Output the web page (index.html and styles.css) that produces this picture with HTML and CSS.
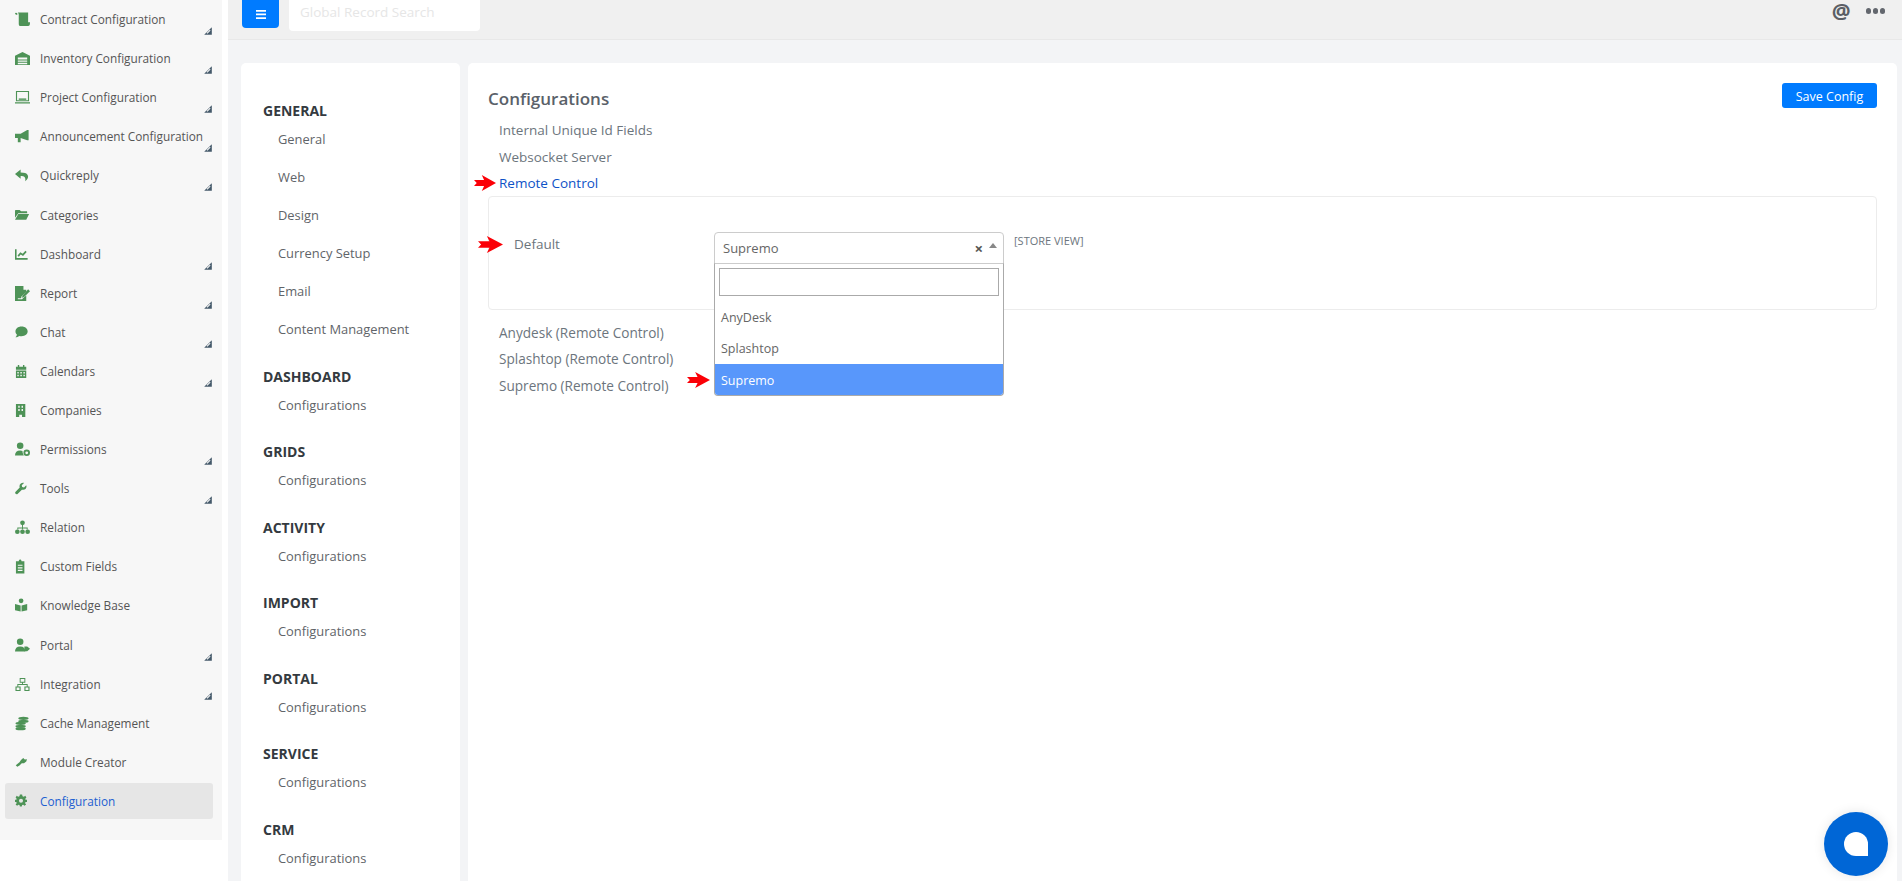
FILE: index.html
```html
<!DOCTYPE html>
<html lang="en">
<head>
<meta charset="utf-8">
<title>Configurations</title>
<link rel="stylesheet" href="styles.css">
</head>
<body>
<svg class="defs" width="0" height="0">
  <defs>
    <symbol id="corner" viewBox="0 0 8 8"><path d="M7.800 0.200V7.800H0.200Z" fill="#44596a"/><path d="M6.200 3.200 3 6.400" stroke="#f7f7f7" stroke-width="1.100"/></symbol>
    <symbol id="arrow" viewBox="0 0 24 16" preserveAspectRatio="none"><path d="M0 5H11L8.500 0 24 8 8.500 16 11 11H0L3 8Z" fill="#fb0007"/></symbol>
  </defs>
</svg>
<aside class="sidebar">
  <a class="nav-item"><svg class="nav-icon" viewBox="0 0 16 16"><path d="M0 1.500C0 .5 2 .5 2.500 1.500V3H1ZM3 .5H14V11H16C16 14 15.500 15 14 15H6C4.500 15 4 14 4 12.500V3C4 2 3.500 1 3 .5Z"/></svg><span>Contract Configuration</span><svg class="corner"><use href="#corner"/></svg></a>
  <a class="nav-item"><svg class="nav-icon" viewBox="0 0 16 16"><path d="M0 5 8 1 16 5V15H0ZM3 7V9H13V7ZM3 10V11.500H13V10ZM3 12.500V14H13V12.500Z" fill-rule="evenodd"/></svg><span>Inventory Configuration</span><svg class="corner"><use href="#corner"/></svg></a>
  <a class="nav-item"><svg class="nav-icon" viewBox="0 0 16 16"><path d="M1 1H15V12H1ZM2.200 2.200V10.800H13.800V2.200ZM0 13H16V14.500H0Z" fill-rule="evenodd"/><path d="M4 9H12V10.500H4Z"/></svg><span>Project Configuration</span><svg class="corner"><use href="#corner"/></svg></a>
  <a class="nav-item"><svg class="nav-icon" viewBox="0 0 16 16"><path d="M0 5H6L13 1H14.500V12H13L6 9.500V14H3V9.500H0Z"/></svg><span>Announcement Configuration</span><svg class="corner"><use href="#corner"/></svg></a>
  <a class="nav-item"><svg class="nav-icon" viewBox="0 0 16 16"><path d="M6 1.500 0 6.500 6 11.500V8.500C10 8.500 11.500 9.500 11 14 14 12 14.500 9.500 13.500 7.500 12.500 5.500 10 4.800 6 4.800Z"/></svg><span>Quickreply</span><svg class="corner"><use href="#corner"/></svg></a>
  <a class="nav-item"><svg class="nav-icon" viewBox="0 0 16 16"><path d="M0 3C0 2.500.5 2 1 2H5L6.500 3.500H12.500C13 3.500 13 4 13 5.500H3.500L0 10.500ZM3.500 6.500H15L12 12.500H0Z"/></svg><span>Categories</span></a>
  <a class="nav-item"><svg class="nav-icon" viewBox="0 -1 19 19"><path d="M0 2H2V13H16V15H0Z"/><path d="M4 10.500 7 7 10 9 14 4.500" fill="none" stroke="#4e9357" stroke-width="2.200"/></svg><span>Dashboard</span><svg class="corner"><use href="#corner"/></svg></a>
  <a class="nav-item"><svg class="nav-icon" viewBox="0 0 16 16"><path d="M0 0H9V4H12V6L7 11 6.500 13H3V14H7.500L9 12.500 12 10V16H0Z"/><path d="M8 10 14 3.500 16 5.500 10 11.500 7.500 12.500Z"/></svg><span>Report</span><svg class="corner"><use href="#corner"/></svg></a>
  <a class="nav-item"><svg class="nav-icon" viewBox="0 0 16 16"><path d="M7 1.500C11 1.500 13.500 3.800 13.500 6.700S11 12 7 12C6 12 5 11.800 4.500 11.600 3.500 12.500 2 13 .5 13 1.500 12 2 11 2 10 .8 9.200.5 8 .5 6.700.5 3.800 3 1.500 7 1.500Z"/></svg><span>Chat</span><svg class="corner"><use href="#corner"/></svg></a>
  <a class="nav-item"><svg class="nav-icon" viewBox="0 0 16 16"><path d="M1 3H3V1H4.500V3H8.500V1H10V3H12V6H1ZM1 7H12V15H1ZM2.500 8.500V10H4V8.500ZM5.700 8.500V10H7.300V8.500ZM9 8.500V10H10.500V8.500ZM2.500 11.500V13H4V11.500ZM5.700 11.500V13H7.300V11.500ZM9 11.500V13H10.500V11.500Z" fill-rule="evenodd"/></svg><span>Calendars</span><svg class="corner"><use href="#corner"/></svg></a>
  <a class="nav-item"><svg class="nav-icon" viewBox="0 0 16 16"><path d="M1 1H11V15H7.500V12.500H4.500V15H1ZM3.500 3V5H5V3ZM7 3V5H8.500V3ZM3.500 6.500V8.500H5V6.500ZM7 6.500V8.500H8.500V6.500Z" fill-rule="evenodd"/></svg><span>Companies</span></a>
  <a class="nav-item"><svg class="nav-icon" viewBox="0 0 16 16"><circle cx="5.500" cy="4" r="3.500"/><path d="M0 14.500C0 11 2 9 5.500 9 6.500 9 7.500 9.300 8 9.500 8 11 8.500 13 9.500 14.500Z"/><circle cx="12.500" cy="11.500" r="2.500" fill="none" stroke="#4e9357" stroke-width="2"/></svg><span>Permissions</span><svg class="corner"><use href="#corner"/></svg></a>
  <a class="nav-item"><svg class="nav-icon" viewBox="0 0 20 20"><path d="M15 3.500 12 6.500 9.500 6 9 3.500 12 .5C9 -.2 6 2 6 5 6 5.700 6.100 6.300 6.300 6.800L.8 12.300C-.2 13.300 .2 14.500 .8 15.100 1.500 15.800 2.700 16 3.700 15L9.200 9.500C9.700 9.700 10.300 9.800 11 9.800 14 9.800 16.200 6.800 15 3.500Z" transform="translate(0 2)"/></svg><span>Tools</span><svg class="corner"><use href="#corner"/></svg></a>
  <a class="nav-item"><svg class="nav-icon" viewBox="0 0 16 16"><circle cx="8" cy="3" r="2.500"/><path d="M7.500 5H8.500V8H13.500V10H12.500V9H8.500V10H7.500V9H3.500V10H2.500V8H7.500Z"/><circle cx="2.500" cy="12.500" r="2.500"/><circle cx="8" cy="12.500" r="2.500"/><circle cx="13.500" cy="12.500" r="2.500"/></svg><span>Relation</span></a>
  <a class="nav-item"><svg class="nav-icon" viewBox="0 0 16 16"><path d="M1 2.500H4C4 1 5 .5 5.500 .5S7 1 7 2.500H10V15.500H1ZM3 6V7.200H8V6ZM3 8.800V10H8V8.800ZM3 11.500V12.700H8V11.500Z" fill-rule="evenodd"/></svg><span>Custom Fields</span></a>
  <a class="nav-item"><svg class="nav-icon" viewBox="0 0 16 16"><circle cx="6.500" cy="3" r="2.500"/><path d="M0 6.500 6 8V14.500L0 13ZM7 8 13 6.500V13L7 14.500Z"/></svg><span>Knowledge Base</span></a>
  <a class="nav-item"><svg class="nav-icon" viewBox="0 0 16 16"><circle cx="5.500" cy="4" r="3.500"/><path d="M0 14.500C0 11 2 9 5.500 9S11 11 11 14.500Z"/><path d="M10 9H13L16 11.500 13 14H10Z"/></svg><span>Portal</span><svg class="corner"><use href="#corner"/></svg></a>
  <a class="nav-item"><svg class="nav-icon" viewBox="0 0 16 16"><path d="M5 1H11V6H8.500V7.500H13.500V10H15.500V15H10V10H12.500V8.500H3.500V10H6V15H.5V10H2.500V7.500H7.500V6H5ZM6 2V5H10V2ZM1.700 11.200V13.800H4.800V11.200ZM11.200 11.200V13.800H14.300V11.200Z" fill-rule="evenodd"/></svg><span>Integration</span><svg class="corner"><use href="#corner"/></svg></a>
  <a class="nav-item"><svg class="nav-icon" viewBox="0 0 16 16"><ellipse cx="9" cy="2.500" rx="5.500" ry="1.800"/><ellipse cx="9" cy="5.500" rx="5.500" ry="1.600"/><ellipse cx="6" cy="7.800" rx="5.500" ry="1.800"/><ellipse cx="6" cy="10.800" rx="5.500" ry="1.600"/><ellipse cx="6" cy="13.500" rx="5.500" ry="1.700"/></svg><span>Cache Management</span></a>
  <a class="nav-item"><svg class="nav-icon" viewBox="0 0 20 20"><path d="M1 13.500 6 9.500 8 6.500 11 4 13 6 16 5.500 15 8.500 12 11 9 11 6 14 3 15.500Z"/></svg><span>Module Creator</span></a>
  <a class="nav-item active"><svg class="nav-icon" viewBox="0 -2 20 20"><path d="M6.500 0H9.500L10 2.200 11.800 3 13.700 1.800 15.200 4 13.700 5.500 14 7H16V10H14L13.500 11.500 14.800 13.300 12.700 15 11 13.500 9.500 14 9 16H6.500L6 14 4.500 13.500 2.800 15 .8 13.300 2.200 11.500 1.800 10H0V7H1.800L2.200 5.500 .8 4 2.300 1.800 4.200 3 6 2.200ZM8 5.500A2.700 2.700 0 1 0 8 10.900 2.700 2.700 0 1 0 8 5.500Z" fill-rule="evenodd"/></svg><span>Configuration</span></a>
</aside>

<div class="main">
  <header class="topbar">
    <button class="menu-btn" type="button" aria-label="Menu"><svg viewBox="0 0 10 9" width="10" height="9"><path d="M0 0H10V1.700H0ZM0 3.600H10V5.300H0ZM0 7.200H10V9H0Z" fill="#fff"/></svg></button>
    <div class="search">Global Record Search</div>
    <div class="top-actions">
      <span class="at">@</span>
      <span class="dots"><i></i><i></i><i></i></span>
    </div>
  </header>

  <div class="content">
    <nav class="card side-card">
      <h4>GENERAL</h4>
      <a>General</a><a>Web</a><a>Design</a><a>Currency Setup</a><a>Email</a><a>Content Management</a>
      <h4>DASHBOARD</h4><a>Configurations</a>
      <h4>GRIDS</h4><a>Configurations</a>
      <h4>ACTIVITY</h4><a>Configurations</a>
      <h4>IMPORT</h4><a>Configurations</a>
      <h4>PORTAL</h4><a>Configurations</a>
      <h4>SERVICE</h4><a>Configurations</a>
      <h4>CRM</h4><a>Configurations</a>
    </nav>

    <section class="card config-card">
      <div class="config-head">
        <h3>Configurations</h3>
        <button class="save-btn" type="button">Save Config</button>
      </div>
      <ul class="config-list">
        <li>Internal Unique Id Fields</li>
        <li>Websocket Server</li>
        <li class="current"><svg class="red-arrow a1"><use href="#arrow"/></svg>Remote Control</li>
      </ul>
      <div class="setting-box">
        <div class="setting-label"><svg class="red-arrow a2"><use href="#arrow"/></svg>Default</div>
        <div class="select">
          <span class="select-value">Supremo</span>
          <span class="select-clear">×</span>
          <span class="select-caret"></span>
          <div class="dropdown">
            <div class="dropdown-search"><input type="text" aria-label="Search"></div>
            <div class="option first">AnyDesk</div>
            <div class="option">Splashtop</div>
            <div class="option selected">Supremo</div>
          </div>
        </div>
        <div class="scope">[STORE VIEW]</div>
      </div>
      <ul class="config-list lower">
        <li>Anydesk (Remote Control)</li>
        <li>Splashtop (Remote Control)</li>
        <li>Supremo (Remote Control)</li>
      </ul>
      <svg class="red-arrow a3"><use href="#arrow"/></svg>
    </section>
  </div>
</div>
<div class="chat-bubble"><i></i></div>
</body>
</html>
```
FILE: styles.css
```css
* { box-sizing: border-box; }
html, body { height: 100%; }
body {
  margin: 0;
  display: flex;
  overflow: hidden;
  background: #fff;
  font-family: "Open Sans", "Noto Sans", sans-serif;
  font-size: 13px;
  color: #555;
}
.defs { position: absolute; }

.sidebar {
  width: 222px;
  height: 840px;
  flex: none;
  padding: 0 9px 0 5px;
  background: #f7f7f7;
}
.nav-item {
  position: relative;
  display: flex;
  align-items: center;
  height: 39.100px;
  padding-left: 10px;
  font-size: 11.800px;
  color: #555;
  white-space: nowrap;
}
.nav-item span { margin-top: -1px; }
.nav-icon {
  width: 15px;
  height: 15px;
  flex: none;
  margin-right: 10px;
  fill: #4e9357;
}
.corner {
  position: absolute;
  right: 1px;
  top: 27px;
  width: 8px;
  height: 8px;
}
.nav-item.active {
  height: 36px;
  margin-top: 1px;
  border-radius: 3px;
  background: #e6e6e6;
  color: #1d5fd1;
}
.nav-item.active span { margin-top: 1px; }

.main {
  flex: 1;
  min-width: 0;
  margin-left: 6px;
  background: #f3f4f6;
}
.topbar {
  display: flex;
  height: 40px;
  padding-left: 14px;
  border-bottom: 1px solid #e8e8e8;
  background: #f0f0f0;
}
.menu-btn {
  display: flex;
  align-items: center;
  justify-content: center;
  width: 37px;
  height: 28px;
  padding: 0;
  border: 0;
  border-radius: 0 0 4px 4px;
  background: #007bff;
}
.search {
  width: 191px;
  height: 31px;
  margin-left: 10px;
  padding: 3px 11px;
  border-radius: 0 0 4px 4px;
  background: #fff;
  color: #e6e6e6;
  font-size: 13.500px;
}
.top-actions {
  display: flex;
  align-items: flex-start;
  gap: 15px;
  margin-left: auto;
  margin-right: 17px;
}
.at {
  font-size: 21px;
  font-weight: 700;
  line-height: 23px;
  color: #5b5f66;
}
.dots { display: flex; gap: 1.500px; margin-top: 8px; }
.dots i {
  width: 5.500px;
  height: 5.500px;
  border-radius: 50%;
  background: #63676e;
}

.content {
  display: flex;
  gap: 8px;
  padding: 23px 5px 0 13px;
}
.card {
  height: 830px;
  border-radius: 5px;
  background: #fff;
}
.side-card {
  width: 219px;
  flex: none;
  padding: 37px 22px 0;
}
.side-card h4 {
  margin: 17.500px 0 0;
  height: 20px;
  font-size: 14px;
  font-weight: 700;
  line-height: 22px;
  color: #343a40;
}
.side-card h4:first-child { margin-top: 0; }
.side-card a {
  display: block;
  height: 38px;
  padding: 9px 0 0 15px;
  font-size: 12.900px;
  line-height: 20px;
  color: #5f6469;
}

.config-card {
  position: relative;
  flex: 1;
  min-width: 0;
  padding: 20px 20px 0;
}
.config-head {
  display: flex;
  align-items: flex-start;
  justify-content: space-between;
  height: 34px;
}
.config-head h3 {
  margin: 4px 0 0;
  font-size: 17px;
  font-weight: 600;
  line-height: 24px;
  color: #5a6169;
}
.save-btn {
  width: 95px;
  height: 25px;
  padding: 1px 0 0;
  border: 0;
  border-radius: 3px;
  background: #007bff;
  color: #fff;
  font: 12.500px "Open Sans", sans-serif;
}
.config-list {
  margin: 0;
  padding: 0 0 0 11px;
  list-style: none;
  font-size: 13.500px;
  line-height: 26.500px;
  color: #6c757d;
}
.config-list .current { position: relative; color: #0d52c7; }
.config-list.lower { margin-top: 10px; font-size: 13.600px; }
.setting-box {
  display: flex;
  height: 114px;
  margin-top: -1px;
  padding: 37px 0 0 25px;
  border: 1px solid #ececec;
  border-radius: 4px;
}
.setting-label {
  position: relative;
  width: 200px;
  font-size: 13.500px;
  line-height: 20px;
  color: #6c757d;
}
.select {
  position: relative;
  display: flex;
  align-items: center;
  width: 290px;
  height: 32px;
  margin-top: -2px;
  padding: 0 6px 0 8px;
  border: 1px solid #ccc;
  border-radius: 4px 4px 0 0;
  background: #fff;
  font-size: 13px;
  color: #666;
}
.select-value { flex: 1; }
.select-clear {
  margin: 1px 6px 0 0;
  font-size: 15px;
  font-weight: 700;
  color: #555;
}
.select-caret {
  margin-top: -4px;
  border-right: 4px solid transparent;
  border-bottom: 5px solid #888;
  border-left: 4px solid transparent;
}
.dropdown {
  position: absolute;
  z-index: 2;
  top: 30px;
  left: -1px;
  width: 290px;
  height: 133px;
  overflow: hidden;
  border: 1px solid #aaa;
  border-top-color: #ccc;
  border-radius: 0 0 4px 4px;
  background: #fff;
}
.dropdown-search { padding: 4px 4px 0; height: 36px; }
.dropdown-search input {
  display: block;
  width: 100%;
  height: 28px;
  margin: 0;
  padding: 0;
  border: 1px solid #aaa;
  outline: 0;
}
.option {
  height: 31px;
  padding: 0 6px;
  font-size: 12.500px;
  line-height: 32px;
  color: #666;
}
.option.first { height: 33px; line-height: 35px; }
.option.selected { height: 32px; line-height: 33px; background: #5897fb; color: #fff; }
.scope {
  margin: -3px 0 0 10px;
  font-size: 11px;
  line-height: 20px;
  color: #6c757d;
}
.red-arrow {
  position: absolute;
  width: 22px;
  height: 16px;
}
.a1 { left: -25px; top: 5px; }
.a2 { left: -36px; top: 2px; width: 25px; height: 17px; }
.a3 { left: 219px; top: 309px; width: 23px; }

.chat-bubble {
  position: fixed;
  left: 1824px;
  top: 812px;
  display: flex;
  align-items: center;
  justify-content: center;
  width: 64px;
  height: 64px;
  border-radius: 50%;
  background: #0066d6;
  box-shadow: 0 0 12px rgba(0, 0, 0, .1);
}
.chat-bubble i {
  width: 24px;
  height: 24px;
  border-radius: 50% 50% 0 50%;
  background: #fff;
}
```
